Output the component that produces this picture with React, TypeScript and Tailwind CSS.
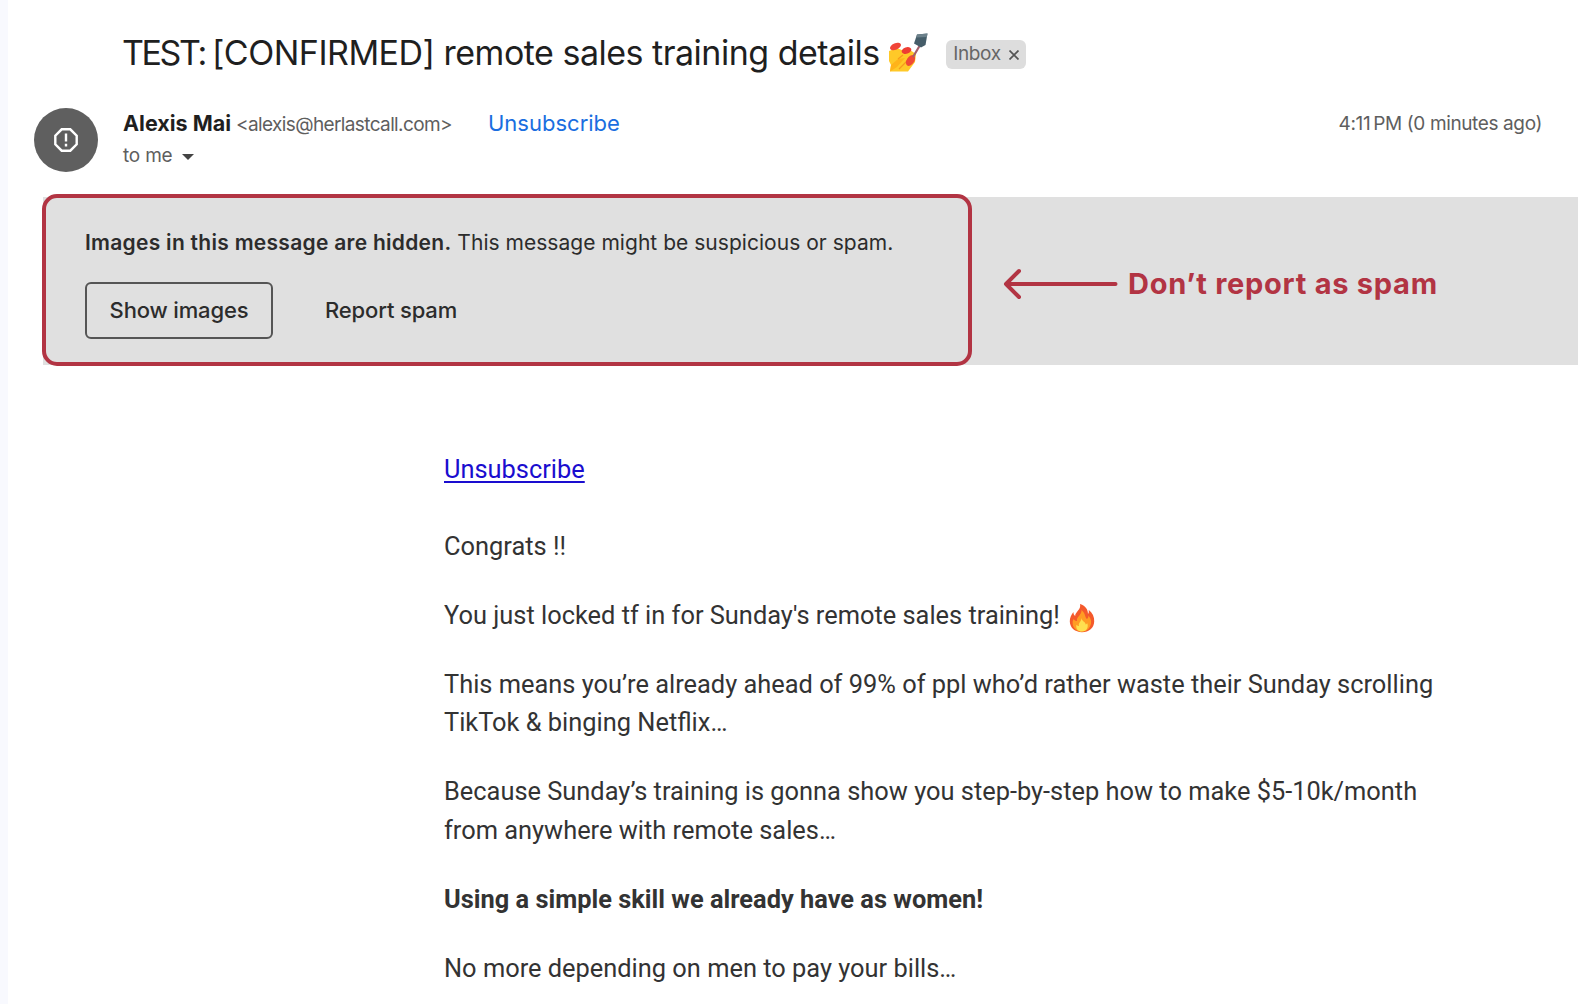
const NailPolish = () => (
  <svg viewBox="0 0 40 40" className="h-10 w-10 shrink-0" aria-label="nail polish">
    <path d="M1 18 L9 15 L16 18 L22 17 L28 21 L27 29 L20 38.5 H2 L3 32 L1 28 Z" fill="#ffc928" />
    <path d="M3 32 L10 26 L17 25 L9 34 L2 38.5 Z" fill="#ffb31a" />
    <path d="M10 26 L15 22 M11 36 L20 27" stroke="#f79a1c" strokeWidth="1.3" fill="none" />
    <ellipse cx="7.5" cy="13.5" rx="5.8" ry="3.2" transform="rotate(-22 7.5 13.5)" fill="#f04438" />
    <ellipse cx="18.5" cy="17.5" rx="5" ry="3.2" transform="rotate(-18 18.5 17.5)" fill="#ee3d33" />
    <ellipse cx="22.5" cy="27.5" rx="6" ry="3.8" transform="rotate(-56 22.5 27.5)" fill="#f04a35" />
    <path d="M25 24 L31.5 13" stroke="#a35f6b" strokeWidth="2.2" />
    <path d="M29 1.5 L39.5 0.5 L37.5 12 L33 14.5 L26 10.5 Z" fill="#455d69" />
    <path d="M29 1.5 L39.5 0.5 L38.8 4 L28.4 4.5 Z" fill="#6c818b" />
  </svg>
);

const Fire = () => (
  <svg viewBox="0 0 26 30" className="mt-1.5 h-[30px] w-[26px] shrink-0" aria-label="fire">
    <path
      d="M11 1 C17 3 19 7 19 11 C20 10 20 8 19.6 6.8 C23.5 10 25.5 14 25.2 18.5 C25 25 20 29.2 13 29.2 C6 29.2 1 25 .8 18.6 C.7 14.5 2.5 11.5 4.4 9 C4.4 11 5 12.3 6.2 13 C6 9 12.5 6.5 11 1 Z"
      fill="#f4592b"
    />
    <path
      d="M12.5 7 C17 11 15.5 14 18 16 C19 15 19.6 14 19.4 12.5 C22.5 16 23 20 21 23.5 C19 27.5 16 28.6 13 28.6 C7.5 28.6 3.5 25 3.6 19.5 C3.7 18 4 17 4.8 16 C5.5 17.5 6.5 18 8 18 C7 14 13 12 12.5 7 Z"
      fill="#ff9b24"
    />
    <path
      d="M12.5 15 C13 18.5 17 19 16.6 21.5 C17.5 21.3 18 20.6 18 20 C20 23.5 18 28.4 13 28.6 C8.5 28.5 6.6 25.5 7.5 21.8 C8.3 22.8 9 23 10 23 C9 20 12.5 18.5 12.5 15 Z"
      fill="#ffe04f"
    />
  </svg>
);

const SpamIcon = () => (
  <svg viewBox="0 0 24 24" className="h-6 w-6" fill="none" stroke="#fff" strokeWidth="2.4">
    <path d="M7.7 1.3 H16.3 L22.7 7.7 V16.3 L16.3 22.7 H7.7 L1.3 16.3 V7.7 Z" />
    <path d="M12 5.5 V13.6 M12 15.8 V18.4" />
  </svg>
);

const Arrow = () => (
  <svg
    viewBox="0 0 116 34"
    className="h-[34px] w-[116px] shrink-0"
    fill="none"
    stroke="#b23443"
    strokeWidth="4"
    strokeLinecap="round"
    strokeLinejoin="round"
  >
    <path d="M112.5 17 H3 M16 4 L3 17 L16 30" />
  </svg>
);

const Header = () => (
  <header>
    <div className="flex h-[106px] items-start pl-[115px] pt-[31px]">
      <h1 className="-ml-px w-[758px] whitespace-nowrap text-[34px] leading-[43px] tracking-[-0.5px] text-[#1f1f1f]">
        <span className="tracking-[-2.4px]">TEST: </span>
        <span className="tracking-[-0.5px]">[CONFIRMED]</span> remote sales training details
      </h1>
      <div className="ml-2 mt-0.5">
        <NailPolish />
      </div>
      <div className="ml-[18px] mt-[9px] flex h-[29px] w-20 items-center justify-center gap-2 rounded-md bg-[#dddddd] text-[19px] tracking-[-0.4px] text-[#666666]">
        <span>Inbox</span>
        <svg viewBox="0 0 10 10" className="h-2.5 w-2.5" stroke="#555" strokeWidth="1.7">
          <path d="M.5 .5 L9.5 9.5 M9.5 .5 L.5 9.5" />
        </svg>
      </div>
    </div>

    <div className="flex h-[91px] items-start pl-[26px] text-[#5e5e5e]">
      <div className="mt-0.5 flex h-16 w-16 items-center justify-center rounded-full bg-[#5f5f5f]">
        <SpamIcon />
      </div>
      <div className="ml-[25px] mt-px w-[365px] whitespace-nowrap">
        <div className="flex h-[33px] items-baseline leading-8">
          <span className="text-[21.5px] font-bold text-[#1f1f1f]">Alexis Mai</span>
          <span className="ml-[5px] text-[19px] tracking-[-0.62px]">
            &lt;alexis@herlastcall.com&gt;
          </span>
        </div>
        <div className="flex h-8 items-center">
          <span className="text-[19px] tracking-[-0.2px]">to me</span>
          <svg viewBox="0 0 12 6" className="ml-[9px] mt-px h-1.5 w-3" fill="#444">
            <path d="M0 0 H12 L6 6 Z" />
          </svg>
        </div>
      </div>
      <a className="mt-px text-[22px] leading-8 text-[#1a6ee0]">Unsubscribe</a>
      <span className="ml-auto mr-9 mt-0.5 whitespace-nowrap text-[19px] leading-8 tracking-[-0.38px]">
        4:11&thinsp;PM (0 minutes ago)
      </span>
    </div>
  </header>
);

const SpamBanner = () => (
  <section className="ml-[35px] flex h-[168px] items-start bg-[#e0e0e0]">
    <div className="-ml-px -mt-[3px] h-[172px] w-[930px] shrink-0 rounded-[15px] border-4 border-[#b23443] pl-[39px] pt-[30px] text-[#2c2c2c]">
      <p className="whitespace-nowrap text-[21px] leading-[30px] tracking-[0.03px]">
        <span className="font-semibold tracking-[0.28px]">Images in this message are hidden.</span>{" "}
        This message might be suspicious or spam.
      </p>
      <div className="mt-[24px] flex items-center text-[22px] font-medium tracking-[-0.15px]">
        <button className="h-[57px] w-[188px] rounded-md border-2 border-[#555555]">
          Show images
        </button>
        <button className="ml-[52px]">Report spam</button>
      </div>
    </div>
    <div className="ml-[31px] mt-[65px] flex items-center gap-[9px] text-[#b23443]">
      <Arrow />
      <span className="whitespace-nowrap text-[29px] font-bold leading-[44px] tracking-[0.74px]">
        Don’t report as spam
      </span>
    </div>
  </section>
);

const Message = () => (
  <article className="flex flex-col gap-[30.6px] whitespace-nowrap pl-[436px] pt-[85px] font-['Roboto',sans-serif] text-[25.4px] leading-[38.4px] text-[#333333]">
    <a className="mb-2 text-[#1a0dcf] underline decoration-2 underline-offset-[3px]">
      Unsubscribe
    </a>
    <p>Congrats !!</p>
    <p className="flex h-[38.4px] items-center gap-[9px]">
      You just locked tf in for Sunday's remote sales training!
      <Fire />
    </p>
    <p>
      This means you’re already ahead of 99% of ppl who’d rather waste their Sunday scrolling
      <br />
      TikTok &amp; binging Netflix…
    </p>
    <p>
      Because Sunday’s training is gonna show you step-by-step how to make $5-10k/month
      <br />
      from anywhere with remote sales…
    </p>
    <p className="font-bold">Using a simple skill we already have as women!</p>
    <p>No more depending on men to pay your bills…</p>
  </article>
);

const App = () => {
  return (
    <div className="flex h-[1004px] w-[1578px] overflow-hidden bg-white font-['Inter',sans-serif]">
      <div className="w-2 shrink-0 bg-[#f8f9fe]" />
      <main className="min-w-0 flex-1">
        <Header />
        <SpamBanner />
        <Message />
      </main>
    </div>
  );
};

export default App;
